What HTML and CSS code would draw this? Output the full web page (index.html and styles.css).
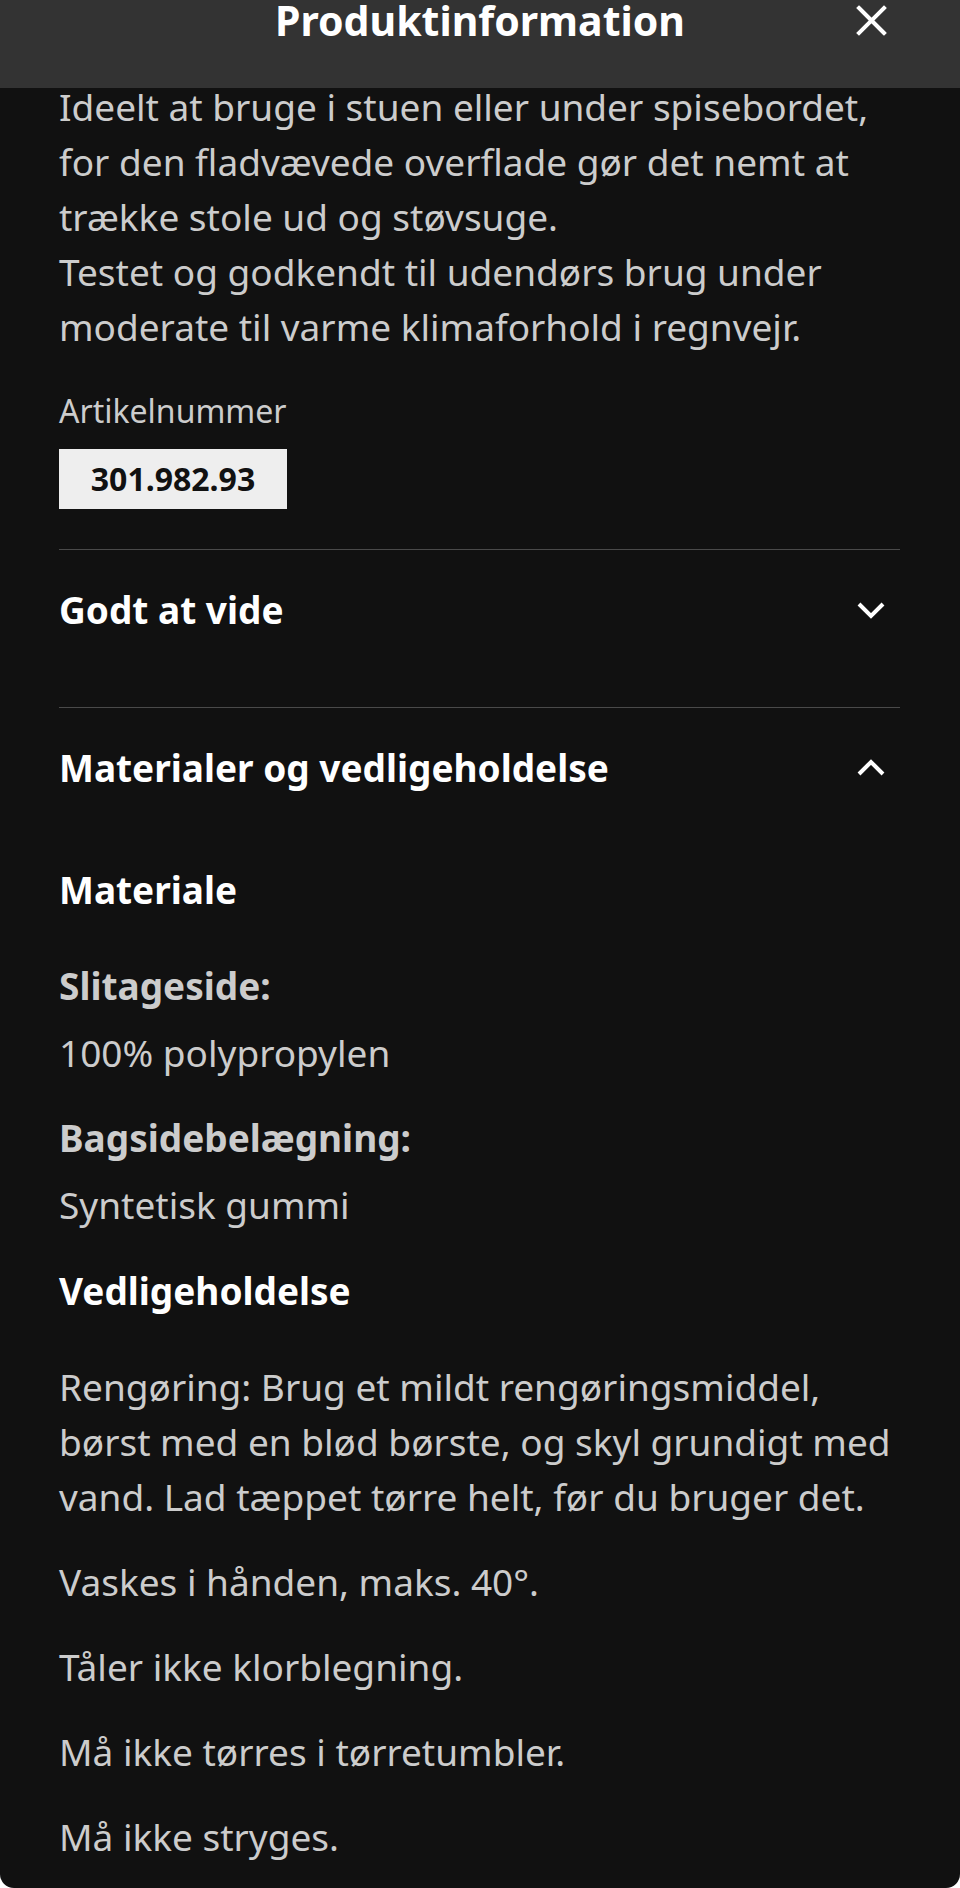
FILE: index.html
```html
<!DOCTYPE html>
<html lang="da">
<head>
<meta charset="utf-8">
<title>Produktinformation</title>
<link rel="stylesheet" href="styles.css">
</head>
<body>
<div class="sheet">
  <header class="topbar">
    <span class="spacer"></span>
    <h1 class="title">Produktinformation</h1>
    <button class="close" aria-label="Luk">
      <svg width="31" height="31" viewBox="0 0 31 31" aria-hidden="true"><path d="M3 3 L28 28 M28 3 L3 28" stroke="#fff" stroke-width="4" stroke-linecap="square" fill="none"/></svg>
    </button>
  </header>

  <main class="content">
    <p class="intro">Ideelt at bruge i stuen eller under spisebordet, for den fladvævede overflade gør det nemt at trække stole ud og støvsuge.<br>Testet og godkendt til udendørs brug under moderate til varme klimaforhold i regnvejr.</p>

    <div class="article-label">Artikelnummer</div>
    <div class="article-number">301.982.93</div>

    <section class="acc acc-closed">
      <div class="acc-head">
        <h2 class="acc-title">Godt at vide</h2>
        <svg class="chev" width="32" height="32" viewBox="0 0 32 32" aria-hidden="true"><path d="M4 10 L16 22 L28 10" stroke="#fff" stroke-width="4" fill="none"/></svg>
      </div>
    </section>

    <section class="acc acc-open">
      <div class="acc-head">
        <h2 class="acc-title">Materialer og vedligeholdelse</h2>
        <svg class="chev" width="32" height="32" viewBox="0 0 32 32" aria-hidden="true"><path d="M4 22 L16 10 L28 22" stroke="#fff" stroke-width="4" fill="none"/></svg>
      </div>
      <div class="acc-body">
        <h3 class="sub">Materiale</h3>
        <div class="group">
          <h4 class="label">Slitageside:</h4>
          <p class="value">100% polypropylen</p>
        </div>
        <div class="group">
          <h4 class="label">Bagsidebelægning:</h4>
          <p class="value">Syntetisk gummi</p>
        </div>
        <h3 class="sub sub-care">Vedligeholdelse</h3>
        <p class="care care-first">Rengøring: Brug et mildt rengøringsmiddel, børst med en blød børste, og skyl grundigt med vand. Lad tæppet tørre helt, før du bruger det.</p>
        <p class="care">Vaskes i hånden, maks. 40°.</p>
        <p class="care">Tåler ikke klorblegning.</p>
        <p class="care">Må ikke tørres i tørretumbler.</p>
        <p class="care">Må ikke stryges.</p>
      </div>
    </section>
  </main>
</div>
</body>
</html>
```

FILE: styles.css
```css
* { box-sizing: border-box; }

html, body {
  margin: 0;
  padding: 0;
  background: #ffffff;
}

body {
  font-family: "Noto Sans", "Open Sans", "Liberation Sans", sans-serif;
  color: #cccccc;
}

.sheet {
  width: 960px;
  height: 1888px;
  background: #111111;
  border-radius: 0 0 14px 14px;
  overflow: hidden;
}

.topbar {
  height: 88px;
  background: #333333;
  display: grid;
  grid-template-columns: 1fr auto 1fr;
  align-items: start;
  padding: 0 73px;
  position: relative;
  z-index: 1;
}

.title {
  margin: 0;
  font-size: 41px;
  line-height: 40px;
  font-weight: 700;
  color: #ffffff;
  white-space: nowrap;
}

.close {
  justify-self: end;
  margin-top: 5px;
  padding: 0;
  border: 0;
  background: transparent;
  width: 31px;
  height: 31px;
  display: block;
}

.close svg { display: block; }

.content {
  padding: 0 60px 0 59px;
  font-size: 37px;
  line-height: 55px;
}

.intro {
  margin: -9px 0 0;
}

.article-label {
  margin-top: 33px;
  font-size: 32px;
  line-height: 48px;
}

.article-number {
  margin-top: 14px;
  display: block;
  height: 60px;
  width: 228px;
  background: #eeeeee;
  color: #111111;
  font-size: 32px;
  line-height: 60px;
  font-weight: 700;
  text-align: center;
}

.acc {
  border-top: 1px solid #4a4a4a;
}

.acc-closed {
  margin-top: 40px;
  padding-bottom: 70px;
}

.acc-head {
  display: flex;
  align-items: center;
  justify-content: space-between;
  padding-top: 32px;
}

.acc-title {
  margin: 0;
  font-size: 37px;
  line-height: 55px;
  font-weight: 700;
  color: #ffffff;
}

.chev {
  display: block;
  margin-right: 13px;
  flex: none;
}

.acc-body {
  padding-top: 67px;
}

.sub {
  margin: 0;
  font-size: 37px;
  line-height: 55px;
  font-weight: 700;
  color: #ffffff;
}

.sub-care {
  margin-top: 31px;
}

.group {
  margin-top: 30px;
}

.group:first-of-type {
  margin-top: 41px;
}

.label {
  margin: 0;
  font-size: 37px;
  line-height: 55px;
  font-weight: 700;
  color: #cccccc;
}

.value {
  margin: 12px 0 0;
}

.care {
  margin: 30px 0 0;
}

.care-first {
  margin-top: 41px;
}
```
